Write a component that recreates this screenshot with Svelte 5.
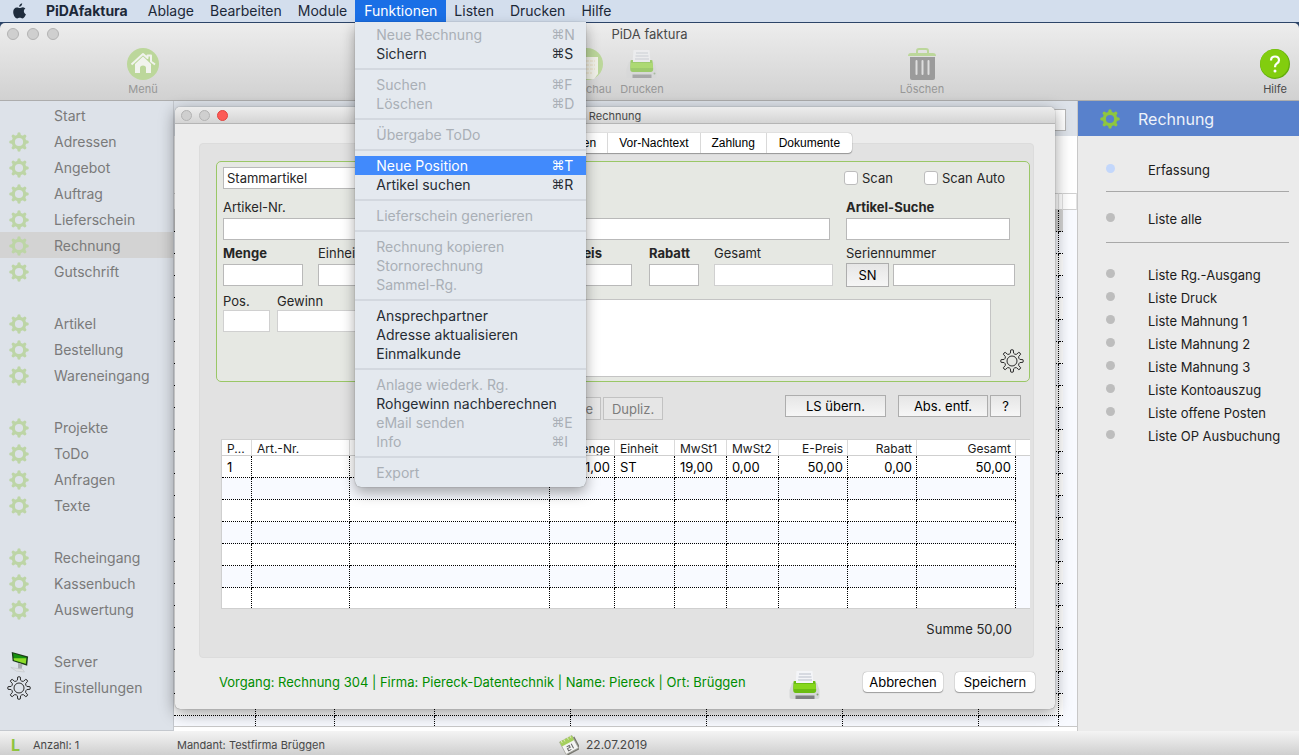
<script>
    const menus = ["Ablage", "Bearbeiten", "Module", "Funktionen", "Listen", "Drucken", "Hilfe"];

    const menuGroups = [
        [{ label: "Neue Rechnung", key: "N", off: true }, { label: "Sichern", key: "S" }],
        [{ label: "Suchen", key: "F", off: true }, { label: "Löschen", key: "D", off: true }],
        [{ label: "Übergabe ToDo", off: true }],
        [{ label: "Neue Position", key: "T" }, { label: "Artikel suchen", key: "R" }],
        [{ label: "Lieferschein generieren", off: true }],
        [
            { label: "Rechnung kopieren", off: true },
            { label: "Stornorechnung", off: true },
            { label: "Sammel-Rg.", off: true }
        ],
        [{ label: "Ansprechpartner" }, { label: "Adresse aktualisieren" }, { label: "Einmalkunde" }],
        [
            { label: "Anlage wiederk. Rg.", off: true },
            { label: "Rohgewinn nachberechnen" },
            { label: "eMail senden", key: "E", off: true },
            { label: "Info", key: "I", off: true }
        ],
        [{ label: "Export", off: true }]
    ];

    const navGroups = [
        ["Start", "Adressen", "Angebot", "Auftrag", "Lieferschein", "Rechnung", "Gutschrift"],
        ["Artikel", "Bestellung", "Wareneingang"],
        ["Projekte", "ToDo", "Anfragen", "Texte"],
        ["Recheingang", "Kassenbuch", "Auswertung"],
        ["Server", "Einstellungen"]
    ];

    const lists = [
        "Liste Rg.-Ausgang",
        "Liste Druck",
        "Liste Mahnung 1",
        "Liste Mahnung 2",
        "Liste Mahnung 3",
        "Liste Kontoauszug",
        "Liste offene Posten",
        "Liste OP Ausbuchung"
    ];

    const columns = [
        { title: "P...", width: 30, value: "1" },
        { title: "Art.-Nr.", width: 98, value: "" },
        { title: "", width: 0, value: "" },
        { title: "Menge", width: 65, value: "1,00", right: true },
        { title: "Einheit", width: 60, value: "ST" },
        { title: "MwSt1", width: 52, value: "19,00" },
        { title: "MwSt2", width: 52, value: "0,00" },
        { title: "E-Preis", width: 69, value: "50,00", right: true },
        { title: "Rabatt", width: 69, value: "0,00", right: true },
        { title: "Gesamt", width: 99, value: "50,00", right: true }
    ];

    const backColumns = [82, 79, 100, 0, 136, 136, 136, 80, 4];
    const tabs = ["Adresse", "Positionen", "Vor-Nachtext", "Zahlung", "Dokumente"];
    const teeth = [0, 45, 90, 135, 180, 225, 270, 315];

    let selected = "Neue Position";
    let current = "Rechnung";
    let scan = false;
    let scanAuto = false;

    // closed outline of a cog with eight teeth round 0,0
    function cogPath(outer, inner) {
        let d = "";
        for (let i = 0; i < 8; i++) {
            const a = (i * Math.PI) / 4;
            const pt = (r, off) => `${(r * Math.sin(a + off)).toFixed(2)} ${(-r * Math.cos(a + off)).toFixed(2)}`;
            d += `${i ? "L" : "M"}${pt(inner, -0.2)}L${pt(outer, -0.12)}Q${pt(outer + 0.7, 0)} ${pt(outer, 0.12)}L${pt(inner, 0.2)}`;
            d += `Q${pt(inner - 1.2, 0.39)} ${pt(inner, 0.585)}`;
        }
        return d + "Z";
    }
</script>

{#snippet gear()}
    <svg class="gear" viewBox="-10 -10 20 20" aria-hidden="true">
        <circle r="5.7" fill="none" stroke="currentColor" stroke-width="3.2" />
        {#each teeth as angle}
            <path d="M-2 -6.6L-1.3 -9.3Q0 -10.2 1.3 -9.3L2 -6.6Z" fill="currentColor" transform={`rotate(${angle})`} />
        {/each}
    </svg>
{/snippet}

{#snippet cog()}
    <svg class="cog" viewBox="-12 -12 24 24" aria-hidden="true">
        <path d={cogPath(11, 8)} fill="none" stroke="#2a2a2a" stroke-width="1" stroke-linejoin="round" />
        <circle r="5" fill="none" stroke="#2a2a2a" stroke-width="1" />
    </svg>
{/snippet}

{#snippet printer()}
    <svg class="printer" viewBox="0 0 32 32" aria-hidden="true">
        <path d="M3 14h25l2.500 7v7q0 2-2 2h-26q-2 0-2-2v-7z" fill="#d6d7d8" />
        <path d="M7.500 2h16l1 12.500h-18z" fill="#f4f5f8" />
        <path d="M10 5h12M9.500 8h13M9 11h14" stroke="#b9bec9" stroke-width="1" />
        <path d="M4.500 13q0-1 1-1h1.500v2h17v-2h1.500q1 0 1 1l0.700 8q0 3-2.500 3h-18q-2.500 0-2.500-3z" fill="#6bbd12" />
        <path d="M5 15h21.500l0.500 5h-22.500z" fill="#86d61c" />
        <path d="M6.500 26.500h19v3.500h-19z" fill="#7f8082" />
        <circle cx="28.500" cy="25.500" r="1" fill="#7fa070" />
    </svg>
{/snippet}

<div class="desktop">
    <nav class="menubar">
        <svg class="apple" viewBox="0 0 14 16" aria-hidden="true">
            <path d="M9.700 0.300C9.800 2.200 8.300 3.800 6.700 3.800 6.500 2.100 8 0.500 9.700 0.300zM12.900 5.600C10.700 7 11 10.200 13.400 11.200 12.700 13.200 11.500 15.400 9.900 15.400 8.900 15.400 8.500 14.800 7.300 14.800 6.100 14.800 5.600 15.400 4.700 15.400 2.800 15.400 0.700 11.900 0.700 8.900 0.700 6 2.500 4.400 4.300 4.400 5.500 4.400 6.400 5.100 7.200 5.100 7.900 5.100 9 4.300 10.400 4.300 11.400 4.400 12.300 4.800 12.900 5.600z" />
        </svg>
        <button class="app-name">PiDAfaktura</button>
        {#each menus as name}
            <div class="menu-slot">
                <button class:open={name == "Funktionen"}>{name}</button>
                {#if name == "Funktionen"}
                    <div class="dropdown" role="menu">
                        {#each menuGroups as group, g}
                            {#if g > 0}<hr />{/if}
                            {#each group as item}
                                <button role="menuitem" disabled={item.off} class:selected={selected == item.label} on:mouseenter={() => (selected = item.label)}>
                                    <span>{item.label}</span>
                                    {#if item.key}<kbd><i>⌘</i>{item.key}</kbd>{/if}
                                </button>
                            {/each}
                        {/each}
                    </div>
                {/if}
            </div>
        {/each}
    </nav>

    <header class="toolbar">
        <div class="titlebar">
            <div class="lights"><span></span><span></span><span></span></div>
            <h1>PiDA faktura</h1>
        </div>
        <div class="tools">
            <button class="tool home" disabled>
                <svg viewBox="0 0 32 32" aria-hidden="true">
                    <circle cx="16" cy="16" r="16" fill="#bcd79b" />
                    <path d="M4.500 16.500L16 6l4.500 4V7.500h3.500v6l4 3" fill="none" stroke="#f1f3ee" stroke-width="2" stroke-linejoin="round" />
                    <path d="M8 16l8-7.500 8 7.500v9h-5v-5q0-2.500-3-2.500t-3 2.500v5H8z" fill="#f1f3ee" />
                </svg>
                Menü
            </button>
            <button class="tool preview" disabled>
                <svg viewBox="0 0 32 32" aria-hidden="true">
                    <circle cx="16" cy="16" r="16" fill="#bcd79b" />
                    <path d="M8 9h19v17l-4 5H8z" fill="#f1f1e8" />
                    <path d="M11 13h13M11 17h13M11 21h13M11 25h10" stroke="#e8dcc0" stroke-dasharray="3 1" />
                </svg>
                Vorschau
            </button>
            <button class="tool print" disabled>{@render printer()}Drucken</button>
            <button class="tool trash" disabled>
                <svg viewBox="0 0 32 32" aria-hidden="true">
                    <path d="M11 5V3q0-2 2-2h7q2 0 2 2v2" fill="none" stroke="#bcd79b" stroke-width="2" />
                    <path d="M2 8q0-3 3-3h22q3 0 3 3z" fill="#bcd79b" />
                    <path d="M4 9h25v21q0 2-2 2H6q-2 0-2-2z" fill="#9b9b9b" />
                    <path d="M10.500 13v13M16.500 13v13M22.500 13v13" stroke="#dedede" stroke-width="2" stroke-linecap="round" />
                </svg>
                Löschen
            </button>
            <button class="tool help">
                <svg viewBox="0 0 32 32" aria-hidden="true">
                    <circle cx="16" cy="16" r="15" fill="#62ad0c" />
                    <circle cx="15.500" cy="15.500" r="14.300" fill="#82cd0e" />
                    <path d="M12 12.500q0-4 4-4t4 3.700q0 2-2.300 3.500-1.700 1.200-1.700 3.500" fill="none" stroke="#fff" stroke-width="2.200" />
                    <circle cx="16" cy="23" r="1.500" fill="#fff" />
                </svg>
                Hilfe
            </button>
        </div>
    </header>

    <div class="workspace">
        <aside class="sidebar">
            {#each navGroups as group}
                <ul>
                    {#each group as name}
                        <li class:current={current == name}>
                            <span class="nav-icon">
                                {#if name == "Server"}
                                    <svg class="server" viewBox="0 0 22 24" aria-hidden="true">
                                        <path d="M3 1l18 5-1 10-16-5z" fill="#1d3b18" />
                                        <path d="M4.500 2.500l15 4.500-1 7-13-4z" fill="#16900f" />
                                        <path d="M5 8l14 0-0.500 6-13-4z" fill="#8fdc2a" />
                                        <path d="M10 13l5 1.500-1 5h-4z" fill="#a9adb0" />
                                        <path d="M2 18l13 2 2 3-9-1z" fill="#dfe1e3" stroke="#b9bcc0" stroke-width="0.500" />
                                    </svg>
                                {:else if name == "Einstellungen"}
                                    {@render cog()}
                                {:else if name != "Start"}
                                    {@render gear()}
                                {/if}
                            </span>
                            <a href="#{name.toLowerCase()}">{name}</a>
                        </li>
                    {/each}
                </ul>
            {/each}
        </aside>

        <main>
            <div class="filter"><input aria-label="Filter" /></div>
            <table class="back">
                <colgroup>
                    {#each backColumns as width}
                        <col style:width={width ? `${width}px` : "auto"} />
                    {/each}
                    <col class="rest" />
                </colgroup>
                <thead>
                    <tr>
                        {#each backColumns as _}<th></th>{/each}
                        <th></th>
                    </tr>
                </thead>
                <tbody>
                    {#each Array(24) as _, r}
                        <tr class:first={r == 0} class:cut={r == 23}>
                            {#each backColumns as _}<td></td>{/each}
                            <td class="rest"></td>
                        </tr>
                    {/each}
                </tbody>
            </table>

            <section class="dialog">
                <div class="dialog-title">
                    <div class="lights small"><span></span><span></span><span class="close"></span></div>
                    <h2>Rechnung</h2>
                </div>
                <div class="tabs">
                    {#each tabs as tab}
                        <button>{tab}</button>
                    {/each}
                </div>
                <div class="panel">
                    <form class="position" on:submit|preventDefault>
                        <div class="row kind">
                            <select aria-label="Artikelart"><option>Stammartikel</option></select>
                            <div class="side checks">
                                <label><input type="checkbox" bind:checked={scan} />Scan</label>
                                <label><input type="checkbox" bind:checked={scanAuto} />Scan Auto</label>
                            </div>
                        </div>
                        <div class="row article">
                            <label class="w-nr">Artikel-Nr.<input /></label>
                            <div class="field grow"><input aria-label="Bezeichnung" /></div>
                            <label class="side bold">Artikel-Suche<input class="search" /></label>
                        </div>
                        <div class="row amounts">
                            <label class="bold w-menge">Menge<input /></label>
                            <label class="w-einheit">Einheit<input /></label>
                            <label class="bold grow price">E-Preis<input /></label>
                            <label class="bold w-rabatt">Rabatt<input /></label>
                            <label class="w-gesamt">Gesamt<input class="pale" readonly /></label>
                            <div class="side">
                                <label for="serial">Seriennummer</label>
                                <div class="serial">
                                    <button class="flat">SN</button>
                                    <input id="serial" />
                                </div>
                            </div>
                        </div>
                        <div class="row notes">
                            <label class="w-pos">Pos.<input class="pale" readonly /></label>
                            <label class="w-gewinn">Gewinn<input class="pale" readonly /></label>
                            <textarea aria-label="Positionstext"></textarea>
                            <button class="icon" aria-label="Optionen">{@render cog()}</button>
                        </div>
                    </form>

                    <div class="actions">
                        <button class="flat remove" disabled>Neue</button>
                        <button class="flat copy" disabled>Dupliz.</button>
                        <button class="flat take">LS übern.</button>
                        <button class="flat strip">Abs. entf.</button>
                        <button class="flat ask">?</button>
                    </div>

                    <table class="positions">
                        <colgroup>
                            {#each columns as col}
                                <col style:width={col.width ? `${col.width}px` : "auto"} />
                            {/each}
                            <col class="rest" />
                        </colgroup>
                        <thead>
                            <tr>
                                {#each columns as col}
                                    <th class:right={col.right}>{col.title}</th>
                                {/each}
                                <th></th>
                            </tr>
                        </thead>
                        <tbody>
                            {#each Array(7) as _, r}
                                <tr class:cut={r == 6}>
                                    {#each columns as col}
                                        <td class:right={col.right}>{r == 0 ? col.value : ""}</td>
                                    {/each}
                                    <td class="rest"></td>
                                </tr>
                            {/each}
                        </tbody>
                    </table>
                    <p class="sum">Summe 50,00</p>
                </div>
                <footer>
                    <p>Vorgang: Rechnung 304 | Firma: Piereck-Datentechnik | Name: Piereck | Ort: Brüggen</p>
                    <button class="icon" aria-label="Drucken">{@render printer()}</button>
                    <button class="push">Abbrechen</button>
                    <button class="push">Speichern</button>
                </footer>
            </section>
        </main>

        <aside class="lists">
            <h2>{@render gear()}Rechnung</h2>
            <ul class="single"><li class="active"><a href="#erfassung">Erfassung</a></li></ul>
            <ul class="single"><li><a href="#alle">Liste alle</a></li></ul>
            <ul class="many">
                {#each lists as name}
                    <li><a href="#listen">{name}</a></li>
                {/each}
            </ul>
        </aside>
    </div>

    <div class="status">
        <b>L</b>
        <span class="count">Anzahl: 1</span>
        <span class="client">Mandant: Testfirma Brüggen</span>
        <svg viewBox="0 0 20 20" aria-hidden="true">
            <g transform="rotate(-28 10 10)">
                <path d="M3 3h14v14H3z" fill="#f4f4f2" stroke="#a8a8a2" stroke-width="0.800" />
                <path d="M3 3h14v5H3z" fill="#a5cf5c" />
                <path d="M5 2v3M8 2v3M12 2v3M15 2v3" stroke="#e6ecc8" stroke-width="0.800" />
                <path d="M7 10.500h3v2H7v2.500h3M12.500 10v5" fill="none" stroke="#666" stroke-width="1" />
                <path d="M4 18h14v-13" fill="none" stroke="#77776f" stroke-width="1.400" />
            </g>
        </svg>
        <span class="date">22.07.2019</span>
    </div>
</div>

<style>
    :global(body) {
        margin: 0;
        background: #2c4468;
    }

    .desktop {
        min-height: 100vh;
        display: flex;
        flex-direction: column;
        font-family: Inter, "Noto Sans", sans-serif;
        font-size: 13px;
        color: #262626;
    }

    .desktop * {
        box-sizing: border-box;
    }

    button,
    input,
    select,
    textarea {
        font: inherit;
        color: inherit;
        margin: 0;
        padding: 0;
        border: 0;
        border-radius: 0;
        background: none;
    }

    h1,
    h2,
    p,
    ul {
        margin: 0;
        padding: 0;
        font-weight: normal;
        list-style: none;
    }

    a {
        color: inherit;
        text-decoration: none;
    }

    svg {
        display: block;
        flex: none;
    }

    /* menu bar */
    .menubar {
        display: flex;
        align-items: center;
        height: 23px;
        padding-left: 12px;
        background: #d3deed;
        border-bottom: 1px solid #2c4468;
        font-size: 14px;
        color: #1c2838;
    }

    .apple {
        width: 15px;
        height: 16px;
        margin-right: 11px;
        fill: #1f2c3d;
    }

    .menubar > button,
    .menu-slot > button {
        display: block;
        height: 22px;
        padding: 0 8px 1px;
        white-space: nowrap;
    }

    .menubar .app-name {
        margin-right: 4px;
        font-weight: 700;
    }

    .menu-slot {
        position: relative;
    }

    .menu-slot > .open {
        padding: 0 9px 1px;
        background: #1a6fe6;
        color: #fff;
    }

    .dropdown {
        position: absolute;
        top: 22px;
        left: 0;
        z-index: 10;
        width: 231px;
        padding: 3px 0 5px;
        background: #e4e9ef;
        border-radius: 0 0 6px 6px;
        box-shadow: 0 0 1px rgba(0, 0, 0, 0.5), 0 6px 14px rgba(0, 0, 0, 0.35);
    }

    .dropdown button {
        display: flex;
        width: 100%;
        height: 19px;
        line-height: 19px;
        padding-left: 21px;
        color: #262c34;
        text-align: left;
    }

    .dropdown button span {
        flex: 1;
    }

    .dropdown button:disabled {
        color: #a9afb6;
    }

    .dropdown .selected {
        background: #418afc;
        color: #fff;
    }

    kbd {
        display: flex;
        width: 35px;
        font-family: inherit;
    }

    kbd i {
        width: 13px;
        font-style: normal;
        font-family: "DejaVu Sans", sans-serif;
        font-size: 13px;
    }

    .dropdown hr {
        height: 2px;
        margin: 5px 0;
        border: 0;
        background: #d3d8df;
    }

    /* main window */
    .toolbar {
        height: 78px;
        background: linear-gradient(#ededed, #d1d1d1);
        border-bottom: 1px solid #adadad;
        border-radius: 5px 5px 0 0;
    }

    .titlebar {
        position: relative;
        display: flex;
        justify-content: center;
        align-items: center;
        height: 22px;
    }

    h1 {
        font-size: 13px;
        color: #484848;
    }

    .lights {
        position: absolute;
        left: 7px;
        display: flex;
        gap: 8px;
    }

    .lights span {
        width: 12px;
        height: 12px;
        border: 1px solid #b3b3b3;
        border-radius: 50%;
        background: #cfcfcf;
    }

    .small {
        gap: 7px;
    }

    .small span {
        width: 11px;
        height: 11px;
    }

    .lights .close {
        background: #fc5b57;
        border-color: #e2443f;
    }

    .tools {
        display: flex;
        padding: 3px 0 0 113px;
    }

    .tool {
        display: flex;
        flex-direction: column;
        align-items: center;
        width: 60px;
        font-size: 11px;
        line-height: 16px;
        color: #979797;
    }

    .tool svg {
        width: 32px;
        height: 32px;
        margin-bottom: 1px;
    }

    .tool .printer {
        opacity: 0.55;
    }

    .preview {
        margin-left: 384px;
    }

    .print {
        margin-left: -5px;
    }

    .trash {
        margin-left: 220px;
    }

    .help {
        margin-left: auto;
        width: 48px;
        color: #4a4a4a;
    }

    .workspace {
        flex: 1;
        display: flex;
    }

    .sidebar {
        flex: none;
        width: 174px;
        padding-top: 1px;
        background: #dde2e9;
        border-right: 1px solid #c4c8ce;
        border-bottom: 1px solid #c4c8ce;
        font-size: 14px;
        line-height: 24px;
        color: #7a7a7a;
    }

    .sidebar ul + ul {
        margin-top: 26px;
    }

    .sidebar li {
        display: flex;
        align-items: center;
        height: 26px;
        padding-top: 2px;
    }

    .current {
        background: #d3d3d3;
    }

    .nav-icon {
        display: flex;
        justify-content: center;
        width: 38px;
        margin-right: 16px;
        color: #bdd5a6;
    }

    .gear {
        width: 20px;
        height: 20px;
    }

    .cog {
        width: 24px;
        height: 24px;
    }

    .server {
        width: 20px;
        height: 24px;
    }

    main {
        position: relative;
        flex: 1;
        min-width: 0;
        background: #fff;
        border-right: 1px solid #c8c8c8;
    }

    .filter {
        display: flex;
        height: 35px;
        margin-bottom: 57px;
        padding: 8px 11px 5px 12px;
        background: #dde2e9;
    }

    .filter input {
        flex: 1;
        background: #fff;
        border: 1px solid #b5b5b5;
    }

    table {
        width: 100%;
        table-layout: fixed;
        border-spacing: 0;
        background: #fff;
    }

    th,
    td {
        padding: 0;
        font-weight: normal;
        text-align: left;
        white-space: nowrap;
        overflow: hidden;
    }

    td {
        height: 22px;
        border-right: 1px dotted #000;
        border-bottom: 1px dotted #000;
    }

    tbody tr:nth-child(even) td,
    td.rest {
        background: #f8faff;
    }

    td.rest {
        border: 0;
    }

    col.rest {
        width: 14px;
    }

    .cut td {
        border-bottom: 0;
    }

    .back {
        border-bottom: 1px solid #c8c8c8;
    }

    .back th {
        height: 17px;
        border-top: 1px solid #d0d0d0;
        border-bottom: 1px solid #d0d0d0;
        border-right: 1px solid #e2e2e2;
    }

    .back td:nth-last-child(2) {
        border-right: 0;
    }

    .back .first td:not(.rest) {
        background: #d3d3d3;
    }

    .back .cut td {
        height: 10px;
    }

    /* invoice window */
    .dialog {
        position: absolute;
        top: 6px;
        left: 1px;
        right: 22px;
        display: flex;
        flex-direction: column;
        background: #ececec;
        border-radius: 5px;
        box-shadow: 0 0 1px rgba(0, 0, 0, 0.6), 0 4px 16px rgba(0, 0, 0, 0.4);
    }

    .dialog-title {
        position: relative;
        display: flex;
        justify-content: center;
        align-items: center;
        height: 17px;
        padding-top: 1px;
        background: linear-gradient(#ededed, #d4d4d4);
        border-bottom: 1px solid #b5b5b5;
        border-radius: 5px 5px 0 0;
        color: #484848;
    }

    .dialog-title h2 {
        font-size: 11px;
    }

    .dialog-title .lights {
        left: 6px;
    }

    .tabs {
        position: relative;
        z-index: 1;
        align-self: center;
        display: flex;
        height: 20px;
        margin: 9px 0 -10px;
        background: #fff;
        border-radius: 4px;
        box-shadow: 0 0 1px rgba(0, 0, 0, 0.5), 0 1px 1px rgba(0, 0, 0, 0.3);
        font: 12px "Liberation Sans", Arial, sans-serif;
        color: #000;
    }

    .tabs button {
        min-width: 66px;
        padding: 0 11px;
    }

    .tabs button:first-child {
        width: 124px;
    }

    .tabs button:nth-child(2) {
        width: 105px;
        text-align: right;
    }

    .tabs button:last-child {
        width: 86px;
    }

    .tabs button + button {
        border-left: 1px solid #d9d9d9;
    }

    .panel {
        margin: 0 21px 0 24px;
        padding: 17px 3px 19px 16px;
        background: #e2e2e2;
        border: 1px solid #dcdcdc;
        border-radius: 4px;
    }

    .position {
        display: flex;
        flex-direction: column;
        height: 221px;
        padding: 5px 5px 4px 6px;
        background: #e6e8e3;
        border: 1px solid #9ac766;
        border-radius: 5px;
    }

    .row {
        display: flex;
    }

    .row > label,
    .field,
    .side {
        display: flex;
        flex-direction: column;
        justify-content: flex-end;
        gap: 3px;
        line-height: 15px;
    }

    .row input,
    select,
    textarea {
        width: 100%;
        height: 22px;
        background: #fff;
        border: 1px solid #b9b9b9;
    }

    .row .pale {
        border-color: #d0d0d0;
    }

    .bold {
        font-weight: 700;
    }

    .grow {
        flex: 1;
    }

    .side {
        width: 178px;
        margin-left: 16px;
    }

    .kind {
        justify-content: space-between;
        align-items: center;
    }

    select {
        width: 200px;
        padding-left: 3px;
        appearance: none;
    }

    .row .checks {
        flex-direction: row;
        justify-content: flex-start;
        gap: 31px;
        width: 180px;
    }

    .checks label {
        display: flex;
        align-items: center;
        gap: 4px;
        white-space: nowrap;
    }

    .row input[type="checkbox"] {
        width: 14px;
        height: 14px;
        appearance: none;
        border: 1px solid #bdbdbd;
        border-radius: 3px;
    }

    .article {
        margin-top: 11px;
    }

    .w-nr {
        width: 180px;
        margin-right: 15px;
    }

    .row .search {
        width: 164px;
    }

    .amounts {
        margin-top: 6px;
    }

    .w-menge {
        width: 80px;
        margin-right: 15px;
    }

    .w-einheit {
        width: 80px;
        margin-right: 110px;
    }

    .price {
        padding-right: 17px;
    }

    .row .price {
        text-indent: 48px;
    }

    .w-rabatt {
        width: 50px;
        margin-right: 15px;
    }

    .w-gesamt {
        width: 119px;
    }

    .amounts .side {
        margin-left: 13px;
    }

    .serial {
        display: flex;
        align-items: center;
        gap: 4px;
        margin: -1px 0;
    }

    .serial .flat {
        width: 43px;
        height: 24px;
    }

    .serial input {
        width: 122px;
    }

    .notes {
        flex: 1;
        align-items: flex-start;
        margin-top: 7px;
    }

    .notes label {
        padding-top: 1px;
    }

    .row.notes label {
        gap: 1px;
    }

    .w-pos {
        width: 47px;
        margin-right: 7px;
    }

    .w-gewinn {
        width: 120px;
        margin-right: 40px;
    }

    .notes textarea {
        flex: 1;
        height: 78px;
        margin-top: 6px;
        border-color: #c4c4c4;
        resize: none;
    }

    .notes .icon {
        align-self: flex-end;
        margin: 0 0 4px 9px;
    }

    .flat {
        background: linear-gradient(#e6e6e6, #f6f6f6);
        border: 1px solid #adadad;
        height: 22px;
        color: #000;
    }

    .flat:disabled {
        background: #e6e6e6;
        border-color: #c2c2c2;
        color: #7c7c7c;
        height: 23px;
        margin-top: 2px;
    }

    .actions {
        display: flex;
        align-items: flex-start;
        padding: 13px 9px 19px 301px;
    }

    .remove {
        width: 84px;
        padding-right: 7px;
        margin-right: 2px;
        text-align: right;
    }

    .copy {
        width: 60px;
    }

    .take {
        width: 101px;
        margin-left: auto;
    }

    .strip {
        width: 90px;
        margin: 0 2px 0 12px;
    }

    .ask {
        width: 31px;
    }

    .positions {
        width: auto;
        min-width: calc(100% - 5px);
        margin-left: 5px;
        border: 1px solid #cfcfcf;
        border-right: 0;
        color: #1a1a1a;
    }

    .positions th {
        height: 16px;
        padding: 2px 4px 0 5px;
        border-bottom: 1px solid #cfcfcf;
        border-right: 1px solid #dadada;
        font-size: 12px;
        line-height: 13px;
    }

    .positions th:last-child {
        border-right: 0;
    }

    .positions td {
        padding: 0 4px 0 5px;
        color: #000;
    }

    .positions .rest {
        padding: 0;
    }

    .positions .cut td {
        height: 20px;
    }

    .positions .right {
        text-align: right;
    }

    .sum {
        padding: 12px 18px 0 0;
        line-height: 17px;
        text-align: right;
    }

    footer {
        display: flex;
        align-items: center;
        height: 51px;
        padding: 0 20px 3px 44px;
    }

    footer p {
        flex: 1;
        color: #008c00;
        white-space: nowrap;
    }

    .printer {
        width: 32px;
        height: 32px;
    }

    footer .icon {
        margin: 5px 42px 0 0;
    }

    .push {
        width: 80px;
        height: 20px;
        background: #fff;
        border-radius: 4px;
        box-shadow: 0 0 1px rgba(0, 0, 0, 0.5), 0 1px 1px rgba(0, 0, 0, 0.3);
        color: #000;
    }

    .push + .push {
        margin-left: 12px;
    }

    /* list panel */
    .lists {
        flex: none;
        width: 221px;
        background: #ebebeb;
        color: #1c1c1c;
    }

    .lists h2 {
        display: flex;
        align-items: center;
        gap: 18px;
        height: 35px;
        padding-left: 22px;
        background: #5881cc;
        font-size: 16px;
        color: #eef2fa;
    }

    .lists .gear {
        color: #8fc63f;
    }

    .lists ul {
        margin: 0 10px 0 28px;
    }

    .lists li {
        display: flex;
        align-items: center;
        gap: 33px;
        height: 23px;
    }

    .lists li::before {
        content: "";
        width: 9px;
        height: 9px;
        margin-bottom: 2px;
        border-radius: 50%;
        background: #bdbdbd;
    }

    .lists .active::before {
        background: #c3d7fb;
    }

    .single {
        padding: 15px 0 12px;
        border-bottom: 1px solid #a8a8a8;
    }

    .lists h2 + .single {
        padding: 22px 0 10px;
    }

    .lists .many {
        margin-top: 20px;
    }

    /* status bar */
    .status {
        display: flex;
        align-items: center;
        height: 24px;
        padding: 3px 0 0 11px;
        background: linear-gradient(#f4f4f4, #cfcfcf);
        font-size: 11px;
        color: #484848;
    }

    .status b {
        width: 22px;
        font-size: 16px;
        color: #8fc43f;
    }

    .count {
        width: 144px;
    }

    .client {
        width: 382px;
    }

    .status svg {
        width: 20px;
        height: 20px;
        margin-right: 7px;
    }

    .date {
        font-size: 12px;
    }
</style>
